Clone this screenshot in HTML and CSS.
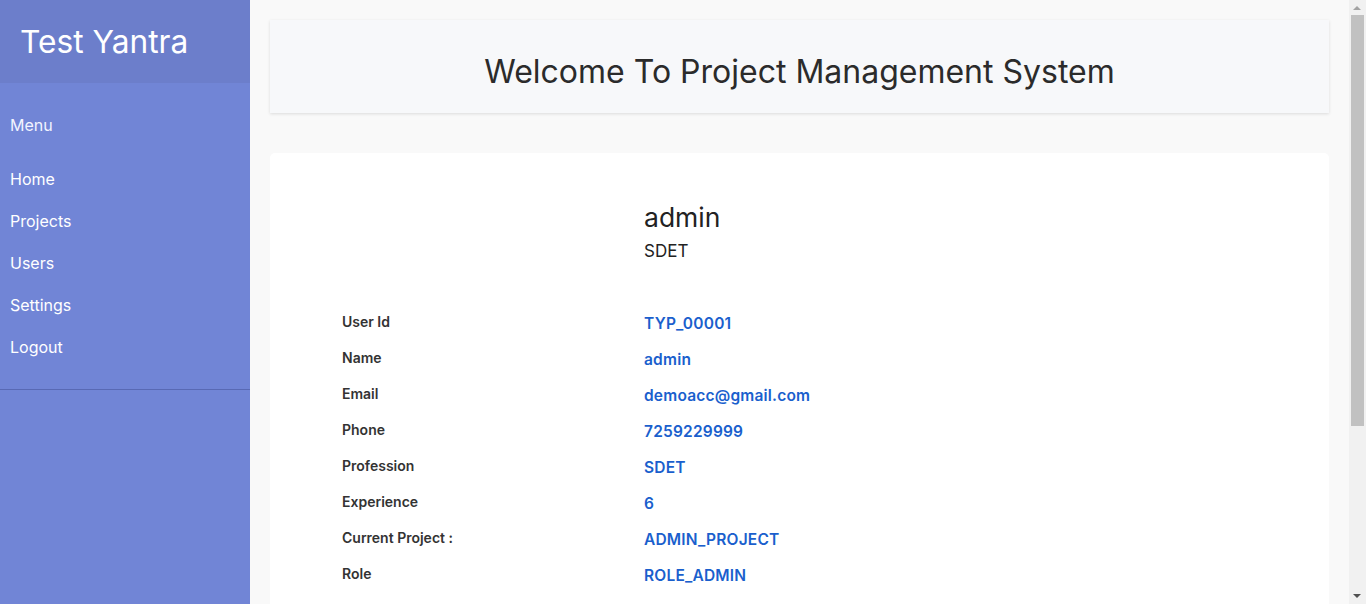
FILE: index.html
```html
<!DOCTYPE html>
<html lang="en">
<head>
<meta charset="utf-8">
<title>Test Yantra</title>
<link rel="stylesheet" href="styles.css">
</head>
<body>
<div class="layout">
  <aside class="sidebar">
    <div class="brand">Test Yantra</div>
    <nav class="menu">
      <div class="menu-title">Menu</div>
      <a class="menu-item" href="#">Home</a>
      <a class="menu-item" href="#">Projects</a>
      <a class="menu-item" href="#">Users</a>
      <a class="menu-item" href="#">Settings</a>
      <a class="menu-item" href="#">Logout</a>
    </nav>
  </aside>
  <main class="main">
    <header class="welcome">
      <h1>Welcome To Project Management System</h1>
    </header>
    <section class="profile">
      <div class="profile-head">
        <div class="profile-name">admin</div>
        <div class="profile-role">SDET</div>
      </div>
      <div class="details">
        <div class="row"><span class="label">User Id</span><span class="value">TYP_00001</span></div>
        <div class="row"><span class="label">Name</span><span class="value">admin</span></div>
        <div class="row"><span class="label">Email</span><span class="value">demoacc@gmail.com</span></div>
        <div class="row"><span class="label">Phone</span><span class="value">7259229999</span></div>
        <div class="row"><span class="label">Profession</span><span class="value">SDET</span></div>
        <div class="row"><span class="label">Experience</span><span class="value">6</span></div>
        <div class="row"><span class="label">Current Project :</span><span class="value">ADMIN_PROJECT</span></div>
        <div class="row"><span class="label">Role</span><span class="value">ROLE_ADMIN</span></div>
      </div>
    </section>
  </main>
</div>
<div class="scrollbar" aria-hidden="true">
  <span class="sb-arrow sb-up"></span>
  <span class="sb-thumb"></span>
  <span class="sb-arrow sb-down"></span>
</div>
</body>
</html>
```
FILE: styles.css
```css
* { box-sizing: border-box; }
html, body { margin: 0; padding: 0; }
body {
  font-family: "Inter", "Open Sans", sans-serif;
  background: #f9f9f9;
  color: #333;
  padding-right: 17px;
}
.layout {
  display: flex;
  min-height: 100vh;
}
.sidebar {
  width: 250px;
  flex: 0 0 250px;
  background: #7185d6;
  color: #fff;
}
.brand {
  height: 83px;
  background: #6c7ecb;
  padding: 22px 0 0 20px;
  font-size: 31.7px;
  line-height: 40px;
  color: #fff;
}
.menu {
  display: flex;
  flex-direction: column;
  padding: 23px 0 20px;
  border-bottom: 1px solid #5869b4;
  height: 307px;
}
.menu-title {
  padding-left: 10px;
  font-size: 16px;
  line-height: 38px;
  color: #f2f4ff;
  margin-bottom: 14px;
}
.menu-item {
  padding-left: 10px;
  font-size: 16px;
  line-height: 42px;
  color: #fff;
  text-decoration: none;
}
.main {
  flex: 1;
  padding: 20px 20px 0 20px;
}
.welcome {
  background: #f7f8fa;
  height: 93px;
  padding-top: 10px;
  display: flex;
  align-items: center;
  justify-content: center;
  box-shadow: 0 1px 3px rgba(0,0,0,0.12);
}
.welcome h1 {
  margin: 0;
  font-size: 32px;
  font-weight: 400;
  color: #2b2b2b;
}
.profile {
  margin-top: 40px;
  background: #fff;
  border-radius: 5px;
  padding: 49px 0 250px;
}
.profile-head {
  padding-left: 374px;
}
.profile-name {
  font-size: 26.5px;
  line-height: 30px;
  color: #222;
}
.profile-role {
  margin-top: 8px;
  font-size: 17px;
  line-height: 22px;
  color: #222;
}
.details {
  margin-top: 42px;
  padding-left: 72px;
}
.row {
  display: flex;
  align-items: center;
  height: 36px;
}
.label {
  width: 302px;
  font-size: 14px;
  font-weight: 600;
  color: #333;
  margin-top: -2px;
}
.value {
  font-size: 15.5px;
  font-weight: 600;
  letter-spacing: 0.2px;
  color: #1a5fcd;
  margin-top: 2px;
}
.scrollbar {
  position: fixed;
  top: 0;
  right: 0;
  width: 17px;
  height: 100vh;
  background: #f1f1f1;
}
.sb-thumb {
  position: absolute;
  left: 2px;
  right: 2px;
  top: 15px;
  height: 411px;
  background: #c1c1c1;
}
.sb-arrow {
  position: absolute;
  left: 4px;
  width: 0;
  height: 0;
  border-left: 4px solid transparent;
  border-right: 4px solid transparent;
}
.sb-up {
  top: 6px;
  border-bottom: 4px solid #a3a3a3;
}
.sb-down {
  bottom: 6px;
  border-top: 4px solid #505050;
}
```
